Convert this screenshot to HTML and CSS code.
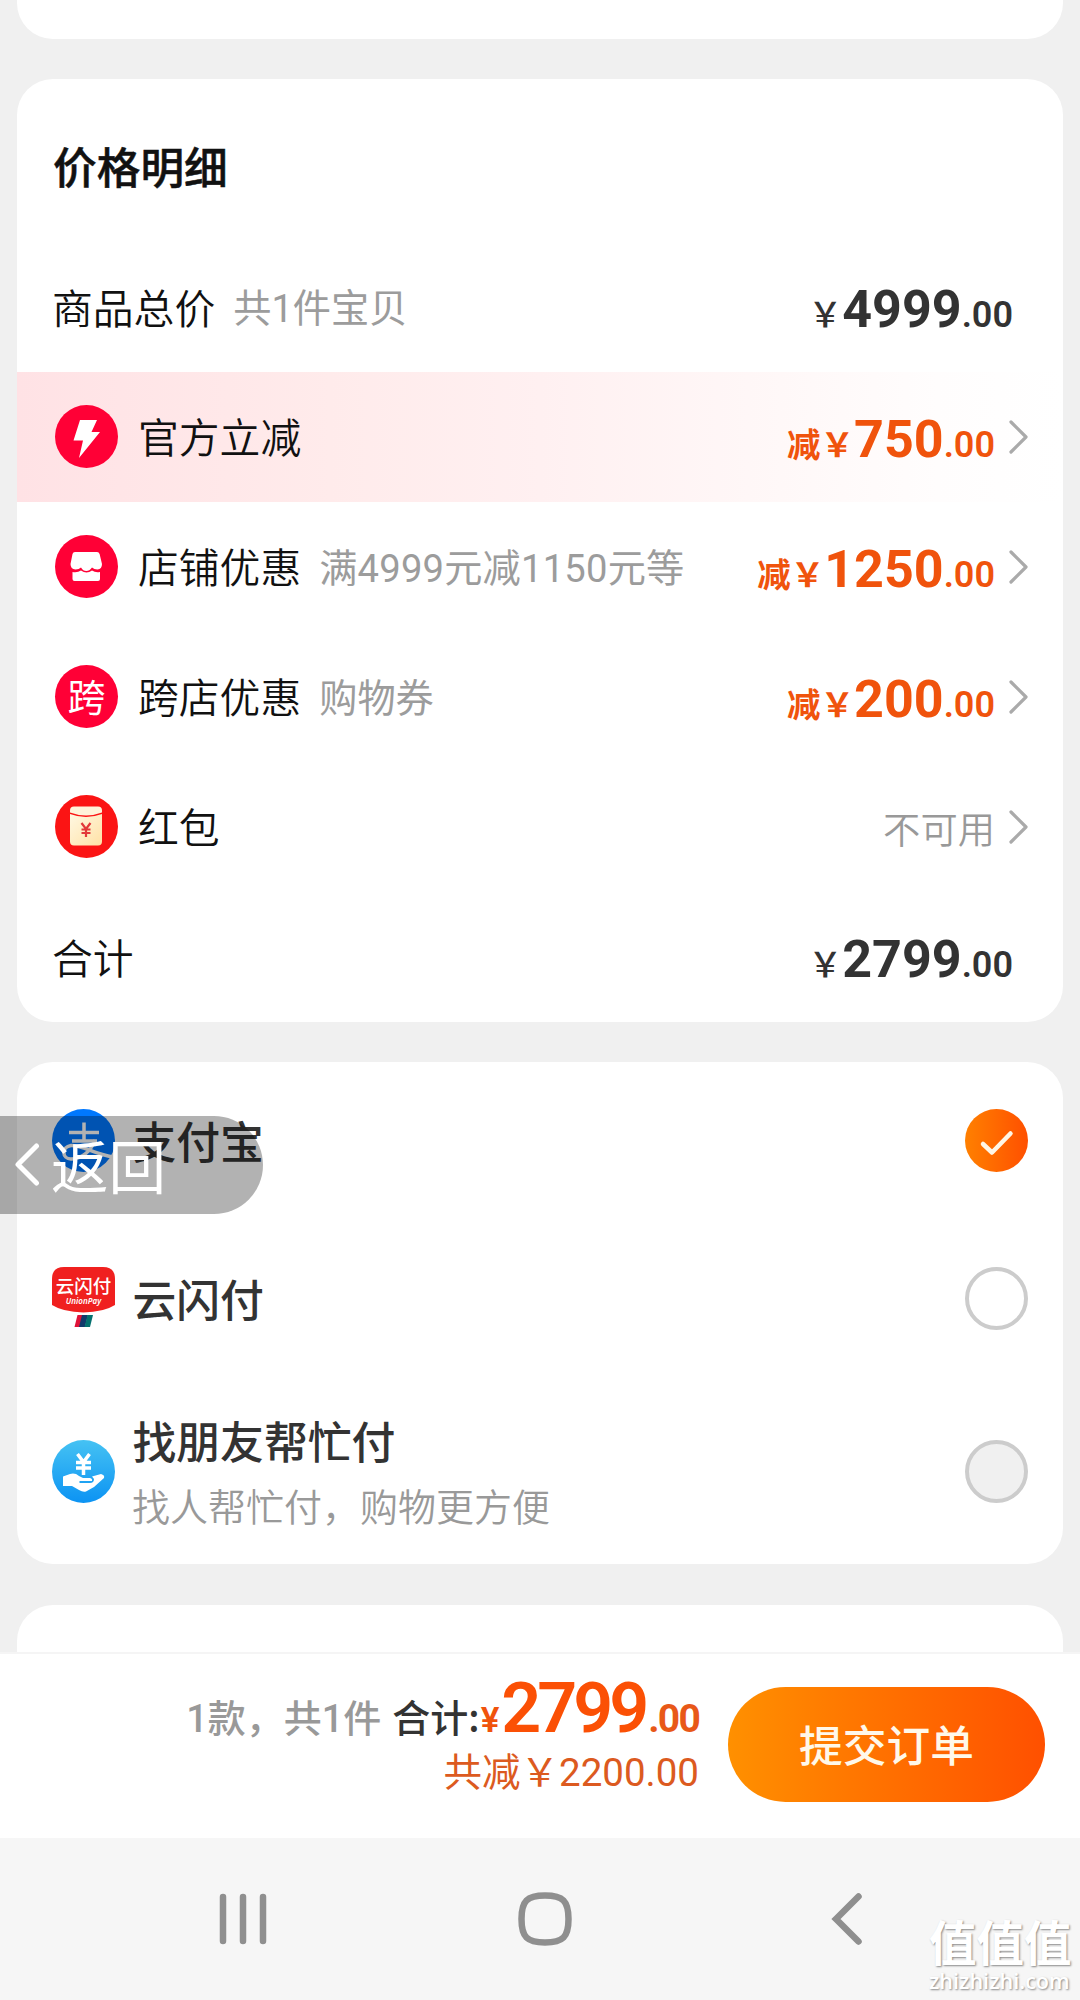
FILE: index.html
```html
<!DOCTYPE html>
<html lang="zh-CN">
<head>
<meta charset="utf-8">
<title>确认订单</title>
<link rel="stylesheet" href="styles.css">
</head>
<body>
<div class="screen">
  <main class="content">
    <section class="card card-top"></section>

    <section class="card price-card">
      <h2 class="card-title">价格明细</h2>
      <div class="row">
        <span class="label">商品总价</span><span class="note">共1件宝贝</span>
        <span class="price">￥<b class="int">4999</b><b class="dec">.00</b></span>
      </div>
      <div class="row row-hot">
        <svg class="icon" viewBox="0 0 63 63"><circle cx="31.500" cy="31.500" r="31.500" fill="#ff0036"/><path d="M25 15H42L36.500 27H45L24 53L28 35.500H18.500Z" fill="#fff"/></svg>
        <span class="label">官方立减</span>
        <span class="price off">减￥<b class="int">750</b><b class="dec">.00</b></span>
        <svg class="arrow" viewBox="0 0 20 34"><path d="M2 3L17 18L2 33"/></svg>
      </div>
      <div class="row">
        <svg class="icon" viewBox="0 0 63 63"><circle cx="31.500" cy="31.500" r="31.500" fill="#ff0036"/><path d="M20 17H42Q44 17 44.600 19L47 29Q47 34 42.500 34.500Q39 34.500 37 32.500Q34.500 36 31.300 36Q28 36 26 32.500Q24 34.500 20.500 34.500Q15.500 34 15.500 29L17.500 19Q18 17 20 17Z" fill="#fff"/><path d="M17.500 37Q22.500 38 26 35.500Q31.500 39.500 37 35.500Q40.500 38 45 37V44Q45 46 43 46H19.500Q17.500 46 17.500 44Z" fill="#fff"/></svg>
        <span class="label">店铺优惠</span><span class="note note-wide">满4999元减1150元等</span>
        <span class="price off">减￥<b class="int">1250</b><b class="dec">.00</b></span>
        <svg class="arrow" viewBox="0 0 20 34"><path d="M2 3L17 18L2 33"/></svg>
      </div>
      <div class="row">
        <span class="icon icon-text">跨</span>
        <span class="label">跨店优惠</span><span class="note">购物券</span>
        <span class="price off">减￥<b class="int">200</b><b class="dec">.00</b></span>
        <svg class="arrow" viewBox="0 0 20 34"><path d="M2 3L17 18L2 33"/></svg>
      </div>
      <div class="row">
        <svg class="icon" viewBox="0 0 63 63">
          <defs><linearGradient id="env" x1="0" y1="0" x2="1" y2="1"><stop offset="0" stop-color="#fff8e2"/><stop offset="1" stop-color="#ffe1a6"/></linearGradient></defs>
          <circle cx="31.500" cy="31.500" r="31.500" fill="#fb1414"/>
          <path d="M15 15.500Q15 11.500 19 11.500H43Q47 11.500 47 15.500V17.500Q31 23.500 15 17.500Z" fill="#fff3da"/>
          <path d="M15 19Q31 25 47 19V46.500Q47 50.500 43 50.500H19Q15 50.500 15 46.500Z" fill="url(#env)"/>
          <path d="M26.500 28L31 34L35.500 28M31 34V42M26.500 34.500H35.500M26.500 38H35.500" fill="none" stroke="#e2383a" stroke-width="2.200"/>
        </svg>
        <span class="label">红包</span>
        <span class="unavailable">不可用</span>
        <svg class="arrow" viewBox="0 0 20 34"><path d="M2 3L17 18L2 33"/></svg>
      </div>
      <div class="row">
        <span class="label">合计</span>
        <span class="price">￥<b class="int">2799</b><b class="dec">.00</b></span>
      </div>
    </section>

    <section class="card pay-card">
      <div class="pay">
        <svg class="icon" viewBox="0 0 63 63"><circle cx="31.500" cy="31.500" r="31.500" fill="#0078ff"/><g fill="none" stroke="#fff" stroke-width="3.500"><path d="M17 23.500H47M32 13.500V31M20 32H45"/><path d="M43 31C39 42 30 50 19 50C10 50 9 38 19 36.500C30 36 42 45 61 48"/></g></svg>
        <span class="pay-name">支付宝</span>
        <svg class="radio" viewBox="0 0 63 63"><defs><linearGradient id="chk"><stop offset="0" stop-color="#ff8000"/><stop offset="1" stop-color="#ff5000"/></linearGradient></defs><circle cx="31.500" cy="31.500" r="31.500" fill="url(#chk)"/><path d="M18 35L27 43.500L45.500 24.500" fill="none" stroke="#fff6e6" stroke-width="4.500" stroke-linecap="round" stroke-linejoin="round"/></svg>
      </div>
      <div class="pay pay-union">
        <svg class="icon" viewBox="0 0 63 63">
          <path d="M0 12Q0 0 12 0H51Q63 0 63 12V38Q52 45 31.500 45.500Q11 45 0 38Z" fill="#f0201f"/>
          <text class="union-cn" x="31.500" y="25.500" text-anchor="middle">云闪付</text>
          <text class="union-en" x="31.500" y="37" text-anchor="middle">UnionPay</text>
          <path d="M25.500 48H31L28 60H22.500Z" fill="#e01238"/><path d="M30 48H36L33 60H27Z" fill="#12396b"/><path d="M35.500 48H41L38 60H32.500Z" fill="#04716f"/>
        </svg>
        <span class="pay-name">云闪付</span>
        <span class="radio radio-off"></span>
      </div>
      <div class="pay pay-friend">
        <svg class="icon" viewBox="0 0 63 63">
          <defs><linearGradient id="sky" x1="0" y1="0" x2="0" y2="1"><stop offset="0" stop-color="#45c2f3"/><stop offset="1" stop-color="#0c93f3"/></linearGradient></defs>
          <circle cx="31.500" cy="31.500" r="31.500" fill="url(#sky)"/>
          <path d="M25.500 14L31.500 22L37.500 14M31.500 22V35M24 22.500H39M24 28H39" fill="none" stroke="#fff" stroke-width="3.500"/>
          <path d="M11 36.500L18 34Q23 32.500 27 36L31 38H38Q40.500 38.500 40 41H27.500V43H38Q42 43 42 39L40 36.500L49 34Q53 35 52 38L42 47L34 51.500Q31 52.500 27 50L20 46H11Z" fill="#fff"/>
        </svg>
        <span class="pay-text"><span class="pay-name">找朋友帮忙付</span><span class="pay-sub">找人帮忙付，购物更方便</span></span>
        <span class="radio radio-off radio-disabled"></span>
      </div>
    </section>

    <section class="card card-next"></section>
  </main>

  <footer class="submit-bar">
    <div class="sum">
      <div class="sum-line"><span class="count">1款，共1件</span><span class="total-label">合计:</span><span class="yen">¥</span><b class="total-int">2799</b><b class="total-dec">.00</b></div>
      <div class="saved">共减￥2200.00</div>
    </div>
    <button class="submit">提交订单</button>
  </footer>

  <nav class="system-nav">
    <svg class="nav-recent" viewBox="0 0 48 52"><path d="M4 4V48M24 4V48M44 4V48"/></svg>
    <svg class="nav-home" viewBox="0 0 56 56"><path d="M28 4.500C46 4.500 51.500 10 51.500 28S46 51.500 28 51.500S4.500 46 4.500 28S10 4.500 28 4.500Z"/></svg>
    <svg class="nav-back" viewBox="0 0 36 56"><path d="M28.500 5.500L6 28L28.500 50.500"/></svg>
  </nav>

  <div class="back-pill">
    <svg class="back-arrow" viewBox="0 0 26 44"><path d="M22.500 4L4 22.500L22.500 41"/></svg>
    <span>返回</span>
  </div>
  <div class="watermark"><span class="wm-cn">值值值</span><span class="wm-en">zhizhizhi.com</span></div>
</div>
</body>
</html>
```
FILE: styles.css
```css
* { box-sizing: border-box; }
body { margin: 0; font-family: "Noto Sans CJK SC", sans-serif; color: #111; }
.screen { position: relative; width: 1080px; height: 2000px; overflow: hidden; background: #f0f0f0; display: flex; flex-direction: column; }
.content { height: 1652px; overflow: hidden; padding: 0 17px; flex: none; }
.card { background: #fff; border-radius: 36px; margin-bottom: 40px; }
.card-top { height: 39px; border-radius: 0 0 36px 36px; }
.price-card { height: 943px; padding-top: 50px; }
.card-title { margin: 0 0 41px; padding-left: 36px; height: 72px; line-height: 72px; font-size: 43.7px; font-weight: 500; -webkit-text-stroke: 0.5px #111; }
.row { height: 130px; display: flex; align-items: center; padding: 0 34px 2px 38px; }
.row-hot { background: linear-gradient(90deg, #ffe2e5 0%, #ffebeb 30%, #fff0f1 50%, #fff7f7 70%, #fffdfd 88%, #fff 100%); }
.row:first-of-type, .row:last-of-type { padding: 0 50px 1px 35px; }
.icon { width: 63px; height: 63px; flex: none; display: block; }
.row .icon { margin-right: 20px; }
.icon-text { border-radius: 50%; background: #ff0036; color: #fff; font-size: 38px; font-weight: 400; text-align: center; line-height: 59px; }
.label { font-size: 40.8px; line-height: 60px; font-weight: 350; white-space: nowrap; }
.note { margin-left: 18px; padding-top: 5px; font-family: Roboto, "Noto Sans CJK SC", sans-serif; font-size: 38.2px; line-height: 60px; font-weight: 400; color: #9c9c9c; white-space: nowrap; }
.note-wide { letter-spacing: 0.2px; }
.price { margin-left: auto; padding-top: 12px; font-size: 34px; line-height: 60px; font-weight: 500; color: #333; white-space: nowrap; }
.price b { font-family: Roboto, sans-serif; line-height: 1; }
.int { font-size: 52px; font-weight: 700; }
.dec { font-size: 36px; font-weight: 600; }
.off { padding-top: 13px; color: #f0530c; font-size: 33.5px; font-weight: 600; }
.arrow { width: 20px; height: 34px; margin-left: 14px; flex: none; overflow: visible; }
.arrow path { fill: none; stroke: #aaa; stroke-width: 3.2; stroke-linecap: round; stroke-linejoin: round; }
.unavailable { margin-left: auto; padding-top: 3px; font-size: 37.3px; font-weight: 350; color: #999; }
.pay-card { height: 502px; padding: 0 35px; }
.pay { height: 156px; display: flex; align-items: center; }
.pay-union { height: 160px; }
.pay-friend { height: 186px; }
.pay-name { margin: -1px 0 0 17.5px; font-size: 43.8px; line-height: 60px; font-weight: 500; color: #333; white-space: nowrap; }
.pay-text { display: flex; flex-direction: column; gap: 5px; padding-top: 3px; }
.pay-sub { margin-left: 17px; font-size: 38px; line-height: 60px; font-weight: 350; color: #999; white-space: nowrap; }
.radio { width: 63px; height: 63px; margin-left: auto; flex: none; }
.radio-off { border: 4px solid #ccc; border-radius: 50%; }
.radio-disabled { background: #f0f0f0; }
.union-cn { font-size: 18.5px; font-weight: 500; fill: #fff; }
.union-en { font-family: "Noto Sans", sans-serif; font-size: 8px; font-weight: 600; font-style: italic; fill: #fff; }
.card-next { height: 90px; margin-top: 41px; }
.submit-bar { height: 186px; flex: none; background: #fff; border-top: 2px solid #f5f5f5; display: flex; justify-content: flex-end; align-items: flex-start; padding-right: 35px; }
.sum { display: flex; flex-direction: column; align-items: flex-end; margin-right: 29px; padding-top: 18px; }
.sum-line { display: flex; align-items: baseline; height: 76px; line-height: 72px; font-size: 36px; font-weight: 500; white-space: nowrap; }
.count { font-family: Roboto, "Noto Sans CJK SC", sans-serif; color: #999; margin-right: 11px; font-size: 38px; }
.total-label { color: #333; font-size: 38px; }
.yen { color: #f0530c; font-family: Roboto, sans-serif; font-weight: 600; font-size: 35px; margin: 0 2px 0 1px; }
.total-int { font-family: Roboto, sans-serif; font-size: 70px; font-weight: 600; letter-spacing: -4px; margin-right: 3px; color: #fb5005; }
.total-dec { font-family: Roboto, sans-serif; font-size: 39px; font-weight: 700; letter-spacing: -1.8px; color: #e85818; }
.saved { font-family: Roboto, "Noto Sans CJK SC", sans-serif; font-size: 38.5px; line-height: 50px; font-weight: 400; color: #dc5a20; white-space: nowrap; }
.submit { margin-top: 33px; width: 317px; height: 115px; border: 0; border-radius: 58px; padding: 0 0 4px; font: 500 43.7px "Noto Sans CJK SC", sans-serif; color: #fff8ea; background: linear-gradient(90deg, #ff9000, #ff5000); }
.system-nav { height: 162px; flex: none; background: #f6f6f6; display: flex; align-items: center; padding: 0 0 0 219px; }
.system-nav path { fill: none; stroke: #8f8f8f; stroke-width: 6.5; stroke-linecap: round; }
.nav-recent { width: 48px; height: 52px; }
.nav-home { width: 56px; height: 56px; margin-left: 250px; }
.nav-back { width: 36px; height: 56px; margin-left: 257px; }
.back-pill { position: absolute; left: 0; top: 1116px; width: 263px; height: 98px; border-radius: 0 49px 49px 0; background: rgba(0,0,0,.3); color: #fff; display: flex; align-items: center; padding: 0 0 2px 14px; font-size: 57.5px; line-height: 90px; font-weight: 400; }
.back-arrow { width: 26px; height: 44px; margin-right: 11px; flex: none; }
.back-arrow path { fill: none; stroke: #fff; stroke-width: 5; stroke-linecap: round; stroke-linejoin: round; }
.watermark { position: absolute; left: 929px; top: 1912px; width: 146px; display: flex; flex-direction: column; color: #fff; text-shadow: 1px 1px 2px #888; white-space: nowrap; }
.wm-cn { font-size: 47.5px; line-height: 57px; font-weight: 600; }
.wm-en { font-family: "Open Sans", sans-serif; font-size: 21.6px; line-height: 24px; font-weight: 600; }
```
